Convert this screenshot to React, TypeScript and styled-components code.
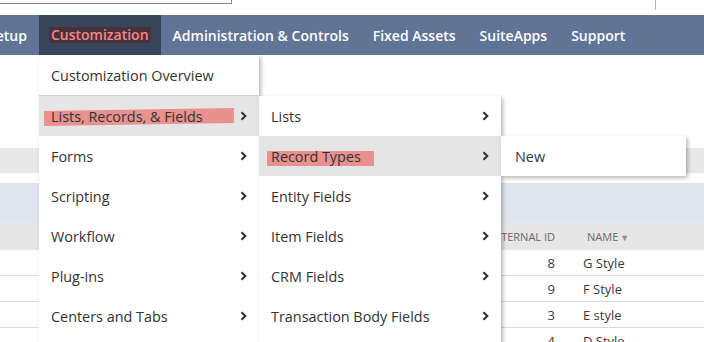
import styled, { createGlobalStyle } from "styled-components";

const GlobalStyle = createGlobalStyle`
  html, body {
    margin: 0;
    padding: 0;
    width: 704px;
    height: 342px;
    overflow: hidden;
    background: #ffffff;
    font-family: "Open Sans", "Liberation Sans", sans-serif;
  }
`;

const Page = styled.div`
  position: relative;
  width: 704px;
  height: 342px;
  overflow: hidden;
`;

// top strip with the edge of the global search box
const TopStrip = styled.div`
  display: flex;
  height: 15px;
`;

const SearchEdge = styled.div`
  width: 231px;
  height: 3px;
  border-right: 1px solid #8a8a8a;
  border-bottom: 1px solid #8a8a8a;
`;

const TopRule = styled.div`
  width: 1px;
  height: 10px;
  margin-left: 423px;
  background: #b5b5b5;
`;

const NavBar = styled.nav`
  display: flex;
  height: 40px;
  margin-left: -24px;
  background: #607496;
`;

const NavItem = styled.div<{ $active?: boolean }>`
  display: flex;
  align-items: center;
  padding: 0 ${(p) => (p.$active ? "10px" : "12px")};
  background: ${(p) => (p.$active ? "#39455b" : "transparent")};
  color: #ffffff;
  font-size: 14px;
  font-weight: 600;
  white-space: nowrap;
`;

const ActiveLabel = styled.span`
  display: inline-block;
  padding: 0 2px;
  line-height: 16px;
  background: #48303f;
  color: #f38a81;
`;

const Content = styled.div`
  display: flex;
  flex-direction: column;
`;

const Blank = styled.div<{ $h: number }>`
  height: ${(p) => p.$h}px;
`;

const GrayBand = styled.div`
  height: 25px;
  background: #e8e8e8;
`;

const BlueBand = styled.div`
  height: 39px;
  background: #dfe5ee;
`;

const TableRow = styled.div<{ $head?: boolean }>`
  display: grid;
  grid-template-columns: 1fr 90px 141px;
  align-items: center;
  height: ${(p) => (p.$head ? "28px" : "25px")};
  background: ${(p) => (p.$head ? "#e6e6e6" : "#ffffff")};
  border-bottom: ${(p) => (p.$head ? "none" : "1px solid #dadada")};
  font-size: ${(p) => (p.$head ? "11px" : "13px")};
  color: ${(p) => (p.$head ? "#6a6a6a" : "#3a3a3a")};
  white-space: nowrap;
`;

const IdCell = styled.div`
  text-align: right;
  padding-right: 8px;
`;

const NameCell = styled.div<{ $head?: boolean }>`
  padding-left: ${(p) => (p.$head ? "24px" : "20px")};
`;

const SortArrow = styled.span`
  margin-left: 2px;
  font-size: 9px;
  color: #8c8c8c;
`;

const Menu = styled.div<{ $width: number }>`
  position: absolute;
  width: ${(p) => p.$width}px;
  background: #ffffff;
  box-shadow: 2px 2px 4px rgba(0, 0, 0, 0.28);
`;

const RootMenu = styled(Menu)`
  left: 39px;
  top: 55px;
  z-index: 1;
`;

const SubMenu = styled(Menu)`
  left: 100%;
  top: 0;
  z-index: 2;
`;

const MenuItem = styled.div<{ $hover?: boolean; $divider?: boolean }>`
  position: relative;
  display: flex;
  align-items: center;
  justify-content: space-between;
  height: 40px;
  padding: 0 12px;
  background: ${(p) => (p.$hover ? "#e5e5e5" : "#ffffff")};
  border-bottom: ${(p) => (p.$divider ? "1px solid #d2d2d2" : "none")};
  color: #333333;
  font-size: 14.4px;
  white-space: nowrap;
`;

const ItemText = styled.span`
  position: relative;
  z-index: 1;
`;

// pink highlighter stroke someone drew on the screenshot
const Marker = styled.span<{ $left: number; $w: number; $tilt?: number }>`
  position: absolute;
  left: ${(p) => p.$left}px;
  top: 50%;
  width: ${(p) => p.$w}px;
  height: 15px;
  margin-top: -5px;
  background: #e8918f;
  transform: rotate(${(p) => p.$tilt ?? 0}deg);
  transform-origin: left center;
`;

const Chevron = () => (
  <svg width="7" height="10" viewBox="0 0 7 10" style={{ position: "relative", zIndex: 1 }}>
    <polyline points="1.5,1.2 5.3,5 1.5,8.8" fill="none" stroke="#2e2e2e" strokeWidth="2" />
  </svg>
);

const rows = [
  { id: 8, name: "G Style" },
  { id: 9, name: "F Style" },
  { id: 3, name: "E style" },
  { id: 4, name: "D Style" },
];

const navItems = ["Setup", "Customization", "Administration & Controls", "Fixed Assets", "SuiteApps", "Support"];

const recordItems = [
  "Entity Fields",
  "Item Fields",
  "CRM Fields",
  "Transaction Body Fields",
  "Transaction Line Fields",
];

const custItems = ["Forms", "Scripting", "Workflow", "Plug-ins", "Centers and Tabs", "Branding"];

export default function App() {
  return (
    <Page>
      <GlobalStyle />
      <TopStrip>
        <SearchEdge />
        <TopRule />
      </TopStrip>

      <NavBar>
        {navItems.map((n) =>
          n === "Customization" ? (
            <NavItem key={n} $active>
              <ActiveLabel>{n}</ActiveLabel>
            </NavItem>
          ) : (
            <NavItem key={n}>{n}</NavItem>
          )
        )}
      </NavBar>

      <Content>
        <Blank $h={93} />
        <GrayBand />
        <Blank $h={10} />
        <BlueBand />
        <TableRow $head>
          <div />
          <IdCell>INTERNAL ID</IdCell>
          <NameCell $head>
            NAME<SortArrow>▼</SortArrow>
          </NameCell>
        </TableRow>
        {rows.map((r) => (
          <TableRow key={r.id}>
            <div />
            <IdCell>{r.id}</IdCell>
            <NameCell>{r.name}</NameCell>
          </TableRow>
        ))}
      </Content>

      <RootMenu $width={220}>
        <MenuItem $divider>
          <ItemText>Customization Overview</ItemText>
        </MenuItem>
        <MenuItem $hover>
          <Marker $left={5} $w={190} $tilt={-0.9} />
          <ItemText>Lists, Records, &amp; Fields</ItemText>
          <Chevron />
          <SubMenu $width={242}>
            <MenuItem>
              <ItemText>Lists</ItemText>
              <Chevron />
            </MenuItem>
            <MenuItem $hover>
              <Marker $left={8} $w={107} />
              <ItemText>Record Types</ItemText>
              <Chevron />
              <SubMenu $width={185}>
                <MenuItem>
                  <ItemText style={{ marginLeft: 2, color: "#2d3a4c" }}>New</ItemText>
                </MenuItem>
              </SubMenu>
            </MenuItem>
            {recordItems.map((t) => (
              <MenuItem key={t}>
                <ItemText>{t}</ItemText>
                <Chevron />
              </MenuItem>
            ))}
          </SubMenu>
        </MenuItem>
        {custItems.map((t) => (
          <MenuItem key={t}>
            <ItemText>{t}</ItemText>
            <Chevron />
          </MenuItem>
        ))}
      </RootMenu>
    </Page>
  );
}
